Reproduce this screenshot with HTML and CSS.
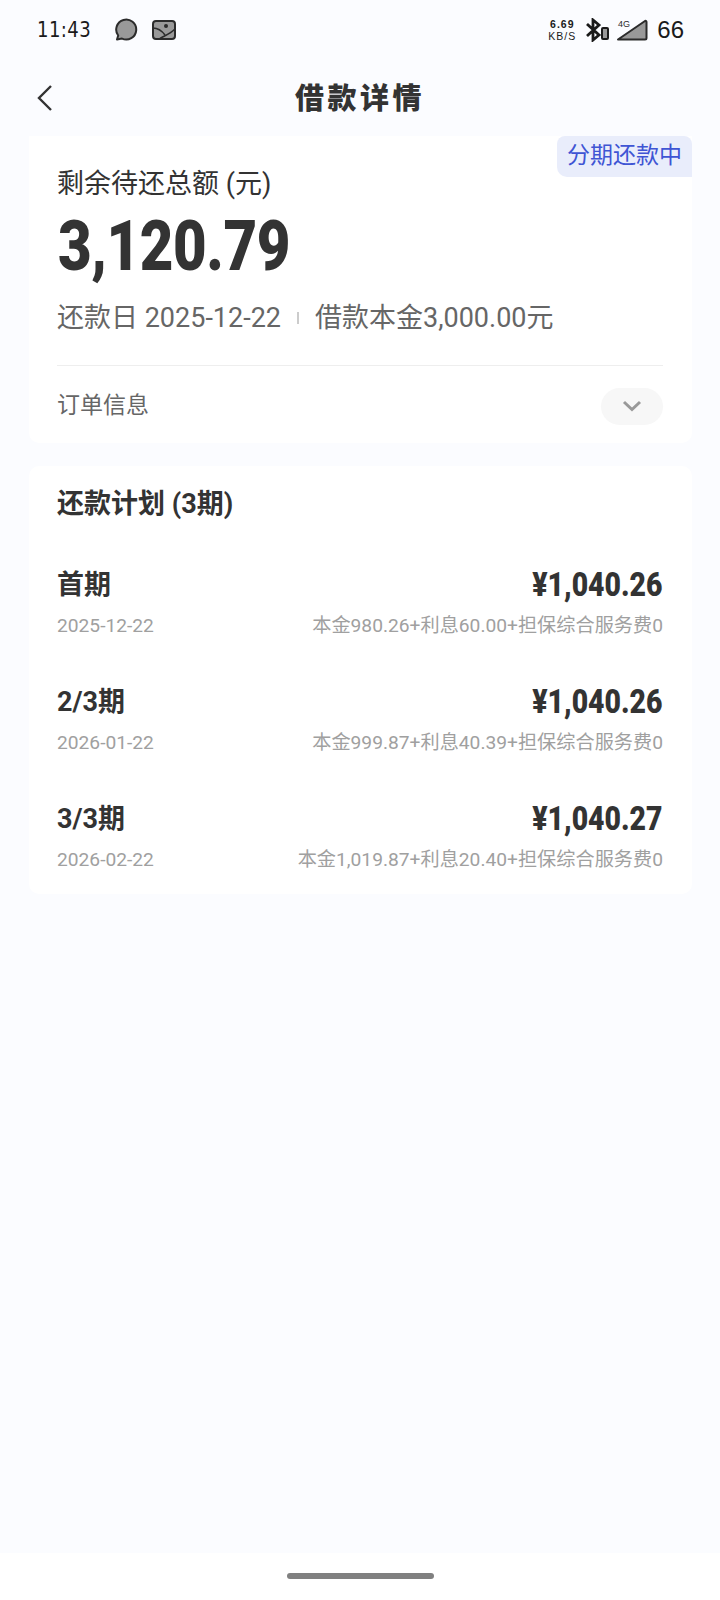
FILE: index.html
```html
<!DOCTYPE html>
<html lang="zh-CN">
<head>
    <meta charset="UTF-8">
    <title>借款详情</title>
    <link rel="stylesheet" href="styles.css">
</head>
<body>
    <div class="page">
        <div class="status-bar">
            <div class="status-left">
                <span class="time">11:43</span>
                <svg class="icon-bubble" width="24" height="24" viewBox="0 0 24 24">
                    <path d="M3 21.5 L4.2 17.5 A10 10 0 1 1 8 20.6 Z" fill="#999" stroke="#2b2b2b" stroke-width="2" stroke-linejoin="round"/>
                </svg>
                <svg class="icon-photo" width="24" height="20" viewBox="0 0 24 20">
                    <rect x="1" y="1" width="22" height="18" rx="3" fill="#999" stroke="#2b2b2b" stroke-width="2"/>
                    <path d="M1 8 C6 8 10 11 13 15" fill="none" stroke="#2b2b2b" stroke-width="1.6"/>
                    <path d="M8 18.5 C12 16 18 14 23 9" fill="none" stroke="#2b2b2b" stroke-width="1.6"/>
                    <circle cx="14" cy="6" r="2" fill="#2b2b2b"/>
                </svg>
            </div>
            <div class="status-right">
                <span class="speed"><b>6.69</b><i>KB/S</i></span>
                <svg class="icon-bt" width="24" height="24" viewBox="0 0 24 24">
                    <path d="M2 6 L14 17 L8 22 L8 2 L14 7 L2 18" fill="none" stroke="#1a1a1a" stroke-width="2.8"/>
                    <rect x="17" y="10" width="6" height="11" rx="1" fill="#999" stroke="#1a1a1a" stroke-width="2"/>
                </svg>
                <svg class="icon-signal" width="32" height="22" viewBox="0 0 32 22">
                    <path d="M2 20.5 L29 2 Q30.5 1.5 30.5 3 V19 Q30.5 20.5 29 20.5 Z" fill="#999" stroke="#2b2b2b" stroke-width="2" stroke-linejoin="round"/>
                    <path d="M1 12 V1 H20 V6 L6 12 Z" fill="#fbfcff"/>
                    <text x="2" y="8" class="signal-text">4G</text>
                </svg>
                <span class="battery">66</span>
            </div>
        </div>

        <div class="nav-bar">
            <svg class="back" width="18" height="28" viewBox="0 0 18 28">
                <path d="M15 2 L3 14 L15 26" fill="none" stroke="#333" stroke-width="2.4"/>
            </svg>
            <h1 class="nav-title">借款详情</h1>
        </div>

        <div class="card summary">
            <span class="tag">分期还款中</span>
            <div class="summary-label">剩余待还总额 (元)</div>
            <div class="summary-amount">3,120.79</div>
            <div class="summary-meta">
                <span>还款日 2025-12-22</span>
                <span class="meta-split"></span>
                <span>借款本金3,000.00元</span>
            </div>
            <div class="order-row">
                <span class="order-label">订单信息</span>
                <span class="expand">
                    <svg width="20" height="12" viewBox="0 0 20 12">
                        <path d="M2 2 L10 9.5 L18 2" fill="none" stroke="#999" stroke-width="3"/>
                    </svg>
                </span>
            </div>
        </div>

        <div class="card plan">
            <h2 class="plan-title">还款计划 (3期)</h2>
            <div class="plan-row">
                <div class="plan-name">首期</div>
                <div class="plan-money">¥1,040.26</div>
                <div class="plan-date">2025-12-22</div>
                <div class="plan-detail">本金980.26+利息60.00+担保综合服务费0</div>
            </div>
            <div class="plan-row">
                <div class="plan-name">2/3期</div>
                <div class="plan-money">¥1,040.26</div>
                <div class="plan-date">2026-01-22</div>
                <div class="plan-detail">本金999.87+利息40.39+担保综合服务费0</div>
            </div>
            <div class="plan-row">
                <div class="plan-name">3/3期</div>
                <div class="plan-money">¥1,040.27</div>
                <div class="plan-date">2026-02-22</div>
                <div class="plan-detail">本金1,019.87+利息20.40+担保综合服务费0</div>
            </div>
        </div>

        <div class="home-area">
            <div class="home-bar"></div>
        </div>
    </div>
</body>
</html>
```

FILE: styles.css
```css
* {
    box-sizing: border-box;
}

body {
    margin: 0;
    font-family: Roboto, "Noto Sans CJK SC", sans-serif;
    background-color: #fbfcff;
    color: #333;
}

.page {
    display: flex;
    flex-direction: column;
    height: 1600px;
}

.status-bar {
    display: flex;
    justify-content: space-between;
    align-items: center;
    height: 60px;
    padding: 0 36px 0 37px;
}

.status-left,
.status-right {
    display: flex;
    align-items: center;
}

.time {
    font-family: "DejaVu Sans", sans-serif;
    font-size: 21px;
    letter-spacing: 0.5px;
    color: #1a1a1a;
    width: 77px;
    transform: scaleX(0.86);
    transform-origin: left center;
}

.icon-photo {
    margin-left: 14px;
}

.speed {
    display: flex;
    flex-direction: column;
    align-items: center;
    font-family: "Liberation Sans", sans-serif;
    font-size: 10.5px;
    line-height: 12px;
    letter-spacing: 1px;
    color: #1a1a1a;
}

.speed b {
    font-weight: bold;
}

.speed i {
    font-style: normal;
}

.icon-bt {
    margin-left: 9px;
}

.icon-signal {
    margin-left: 7px;
}

.signal-text {
    font-family: "Liberation Sans", sans-serif;
    font-size: 9px;
    fill: #2b2b2b;
}

.battery {
    margin-left: 9px;
    font-family: "Liberation Sans", sans-serif;
    font-size: 24px;
    color: #1a1a1a;
}

.nav-bar {
    display: flex;
    align-items: center;
    justify-content: center;
    position: relative;
    height: 76px;
    padding-bottom: 4px;
}

.back {
    position: absolute;
    left: 36px;
    top: 24px;
}

.nav-title {
    margin: 0;
    font-size: 29px;
    font-weight: 900;
    letter-spacing: 3.5px;
    color: #333;
}

.card {
    margin: 0 28px 0 29px;
    background-color: #fff;
    border-radius: 10px;
}

.summary {
    position: relative;
    height: 307px;
    padding: 28px 29px 0 28px;
    border-radius: 0 0 10px 10px;
}

.tag {
    position: absolute;
    top: 0;
    right: 0;
    height: 41px;
    padding: 0 10px;
    line-height: 39px;
    font-size: 23px;
    color: #3f55d4;
    background-color: #e9edfb;
    border-radius: 8px 8px 0 10px;
}

.summary-label {
    font-size: 27px;
    line-height: 40px;
    color: #333;
}

.summary-amount {
    width: fit-content;
    margin: 1px 0 0 1px;
    font-size: 70px;
    line-height: 82px;
    font-weight: 900;
    letter-spacing: -0.5px;
    color: #333;
    transform: scaleX(0.83);
    transform-origin: left center;
}

.summary-meta {
    display: flex;
    align-items: center;
    margin-top: 11px;
    font-size: 27px;
    line-height: 40px;
    color: #666;
}

.meta-split {
    width: 2px;
    height: 12px;
    margin: 0 16px;
    background-color: #ccc;
}

.order-row {
    display: flex;
    justify-content: space-between;
    align-items: center;
    margin-top: 27px;
    padding-top: 20px;
    border-top: 1px solid #eee;
    font-size: 23px;
    color: #666;
}

.order-label {
    margin-bottom: 6px;
}

.expand {
    display: flex;
    align-items: center;
    justify-content: center;
    width: 62px;
    height: 37px;
    border-radius: 19px;
    background-color: #f7f7f7;
}

.plan {
    height: 428px;
    margin-top: 23px;
    padding: 19px 29px 0 28px;
}

.plan-title {
    margin: 0 0 42px;
    font-size: 27px;
    line-height: 38px;
    font-weight: 700;
    color: #333;
}

.plan-row {
    display: grid;
    grid-template-columns: auto 1fr;
    align-items: center;
    height: 117px;
    align-content: start;
    row-gap: 6px;
}

.plan-name {
    font-size: 27px;
    line-height: 40px;
    font-weight: 700;
}

.plan-money {
    justify-self: end;
    margin-right: 1px;
    font-size: 33px;
    line-height: 40px;
    font-weight: 900;
    transform: scaleX(0.86);
    transform-origin: right center;
}

.plan-date {
    font-size: 19.2px;
    line-height: 30px;
    color: #a0a0a0;
}

.plan-detail {
    text-align: right;
    font-size: 19.2px;
    line-height: 30px;
    color: #a0a0a0;
}

.home-area {
    display: flex;
    justify-content: center;
    margin-top: auto;
    height: 47px;
    padding-top: 20px;
    background-color: #fff;
}

.home-bar {
    width: 147px;
    height: 6px;
    border-radius: 3px;
    background-color: #808080;
}
```
